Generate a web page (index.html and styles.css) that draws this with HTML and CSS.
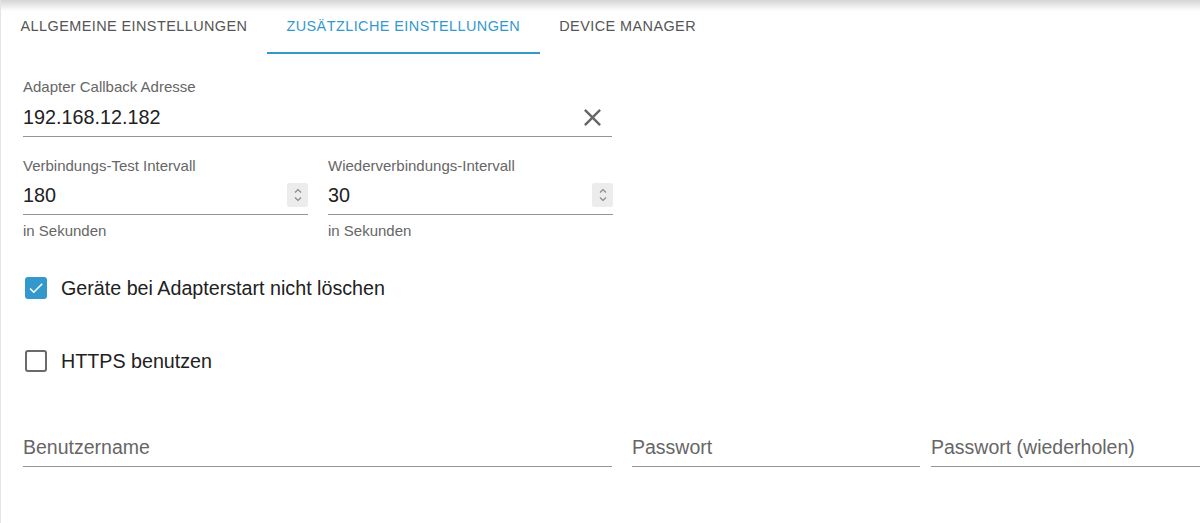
FILE: index.html
```html
<!DOCTYPE html>
<html lang="de">
<head>
    <meta charset="UTF-8">
    <meta name="viewport" content="width=device-width, initial-scale=1.0">
    <title>Adapter Einstellungen</title>
    <link rel="stylesheet" href="styles.css">
</head>
<body>

<div class="page">
    <div class="tabs">
        <div class="tab">Allgemeine Einstellungen</div>
        <div class="tab active">Zusätzliche Einstellungen</div>
        <div class="tab">Device Manager</div>
    </div>

    <div class="content">
        <div class="field wide">
            <label class="field-label" for="callback">Adapter Callback Adresse</label>
            <div class="input-row">
                <input id="callback" class="input" type="text" value="192.168.12.182">
                <span class="clear-btn">
                    <svg viewBox="0 0 24 24" width="29" height="29"><path d="M19 6.41L17.59 5 12 10.59 6.41 5 5 6.41 10.59 12 5 17.59 6.41 19 12 13.41 17.59 19 19 17.59 13.41 12z"/></svg>
                </span>
            </div>
        </div>

        <div class="row">
            <div class="field half">
                <label class="field-label" for="test-interval">Verbindungs-Test Intervall</label>
                <div class="input-row">
                    <input id="test-interval" class="input" type="text" value="180">
                    <span class="spinner">
                        <svg viewBox="0 0 12 20" width="12" height="20"><path d="M3 7.5L6 4.5l3 3M3 12.5L6 15.5l3-3"/></svg>
                    </span>
                </div>
                <div class="helper">in Sekunden</div>
            </div>
            <div class="field half">
                <label class="field-label" for="reconnect-interval">Wiederverbindungs-Intervall</label>
                <div class="input-row">
                    <input id="reconnect-interval" class="input" type="text" value="30">
                    <span class="spinner">
                        <svg viewBox="0 0 12 20" width="12" height="20"><path d="M3 7.5L6 4.5l3 3M3 12.5L6 15.5l3-3"/></svg>
                    </span>
                </div>
                <div class="helper">in Sekunden</div>
            </div>
        </div>

        <div class="check-row first">
            <span class="checkbox checked">
                <svg viewBox="0 0 24 24" width="18" height="18"><path d="M9 16.17L4.83 12l-1.42 1.41L9 19 21 7l-1.41-1.41z"/></svg>
            </span>
            <span class="check-label">Geräte bei Adapterstart nicht löschen</span>
        </div>

        <div class="check-row">
            <span class="checkbox"></span>
            <span class="check-label">HTTPS benutzen</span>
        </div>

        <div class="row login">
            <div class="field user">
                <div class="input-row">
                    <span class="placeholder">Benutzername</span>
                </div>
            </div>
            <div class="field pass">
                <div class="input-row">
                    <span class="placeholder">Passwort</span>
                </div>
            </div>
            <div class="field pass-repeat">
                <div class="input-row">
                    <span class="placeholder">Passwort (wiederholen)</span>
                </div>
            </div>
        </div>
    </div>
</div>

</body>
</html>
```

FILE: styles.css
```css
body {
    margin: 0;
    font-family: "Liberation Sans", Arial, sans-serif;
    background-color: #fff;
    color: #212121;
    overflow: hidden;
}
.page {
    border-left: 1px solid #e4e4e4;
    min-height: 523px;
    box-sizing: border-box;
    overflow: hidden;
}
.tabs {
    display: flex;
    height: 55px;
    background: linear-gradient(rgba(0, 0, 0, 0.17), rgba(0, 0, 0, 0) 11px);
}
.tab {
    position: relative;
    padding: 0 19.5px;
    font-size: 14.45px;
    letter-spacing: 0.43px;
    text-transform: uppercase;
    color: #555;
    line-height: 53px;
    white-space: nowrap;
}
.tab.active {
    color: #3399cc;
}
.tab.active::after {
    content: "";
    position: absolute;
    left: 0;
    right: 0;
    bottom: 1px;
    height: 2px;
    background-color: #3399cc;
}
.content {
    padding: 23px 0 0 22px;
}
.row {
    display: flex;
    gap: 20px;
}
.field {
    display: flex;
    flex-direction: column;
    flex-shrink: 0;
}
.field.wide {
    width: 589px;
}
.field.half {
    width: 285px;
}
.row:not(.login) {
    margin-top: 20px;
}
.field-label {
    font-size: 15px;
    line-height: 17px;
    color: #666;
    margin-bottom: 3px;
}
.input-row {
    display: flex;
    align-items: center;
    height: 38px;
    border-bottom: 1px solid #949494;
}
.half .input-row {
    height: 37px;
}
.input {
    flex: 1;
    min-width: 0;
    border: none;
    outline: none;
    padding: 0;
    font-family: inherit;
    font-size: 19.8px;
    color: #212121;
    background: transparent;
}
.clear-btn {
    display: flex;
    margin-right: 5px;
}
.clear-btn svg {
    fill: #666;
}
.spinner {
    display: flex;
    align-items: center;
    justify-content: center;
    width: 21px;
    height: 24px;
    background-color: #ececec;
    border-radius: 2px;
    margin-top: -1px;
}
.spinner svg {
    fill: none;
    stroke: #8a8a8a;
    stroke-width: 1.2;
}
.helper {
    font-size: 15px;
    line-height: 17px;
    color: #666;
    margin-top: 7px;
}
.check-row {
    display: flex;
    align-items: center;
    height: 42px;
    margin-top: 31px;
    padding-left: 2px;
}
.check-row.first {
    margin-top: 28px;
}
.checkbox {
    display: flex;
    align-items: center;
    justify-content: center;
    width: 22px;
    height: 22px;
    box-sizing: border-box;
    border: 2px solid #6a6a6a;
    border-radius: 3px;
}
.checkbox.checked {
    border: none;
    background-color: #3399cc;
}
.checkbox svg {
    fill: #fff;
}
.check-label {
    margin-left: 14px;
    font-size: 19.7px;
    color: #212121;
}
.login {
    margin-top: 46px;
}
.placeholder {
    font-size: 19.5px;
    color: #666;
}
.field.user {
    width: 589px;
}
.field.pass {
    width: 288px;
}
.field.pass-repeat {
    width: 280px;
    margin-left: -9px;
}
```
